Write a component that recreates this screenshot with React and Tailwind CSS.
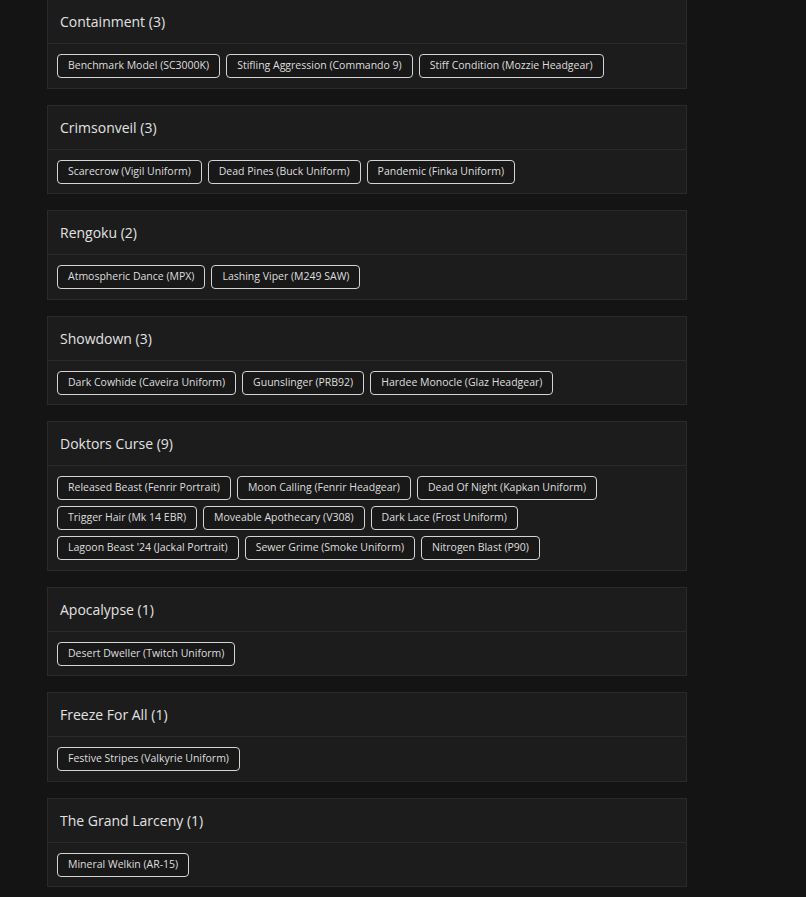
const groups = [
  { name: 'Containment', items: ['Benchmark Model (SC3000K)', 'Stifling Aggression (Commando 9)', 'Stiff Condition (Mozzie Headgear)'] },
  { name: 'Crimsonveil', items: ['Scarecrow (Vigil Uniform)', 'Dead Pines (Buck Uniform)', 'Pandemic (Finka Uniform)'] },
  { name: 'Rengoku', items: ['Atmospheric Dance (MPX)', 'Lashing Viper (M249 SAW)'] },
  { name: 'Showdown', items: ['Dark Cowhide (Caveira Uniform)', 'Guunslinger (PRB92)', 'Hardee Monocle (Glaz Headgear)'] },
  {
    name: 'Doktors Curse',
    items: [
      'Released Beast (Fenrir Portrait)', 'Moon Calling (Fenrir Headgear)', 'Dead Of Night (Kapkan Uniform)',
      'Trigger Hair (Mk 14 EBR)', 'Moveable Apothecary (V308)', 'Dark Lace (Frost Uniform)',
      "Lagoon Beast '24 (Jackal Portrait)", 'Sewer Grime (Smoke Uniform)', 'Nitrogen Blast (P90)',
    ],
  },
  { name: 'Apocalypse', items: ['Desert Dweller (Twitch Uniform)'] },
  { name: 'Freeze For All', items: ['Festive Stripes (Valkyrie Uniform)'] },
  { name: 'The Grand Larceny', items: ['Mineral Welkin (AR-15)'] },
]

function Group({ name, items }) {
  return (
    <div className="border border-[#2a2a2a] bg-[#1c1c1c]">
      <div className="h-[44px] flex items-center px-3 border-b border-[#2a2a2a]">
        <span className="text-[14px] font-medium text-[#e2e2e2]">{name} ({items.length})</span>
      </div>
      <div className="flex flex-wrap gap-[6px] px-[9px] pt-[10px] pb-[9.5px]">
        {items.map(it => (
          <span
            key={it}
            className="h-[24px] flex items-center px-[10px] rounded-[4px] border border-[#d4d4d4] text-[10.5px] text-[#dedede] bg-[#181818]"
          >
            {it}
          </span>
        ))}
      </div>
    </div>
  )
}

export default function App() {
  return (
    <div className="min-h-screen bg-[#141414] font-['Open_Sans',sans-serif] overflow-hidden">
      <div className="ml-[47px] -mt-px w-[640px] flex flex-col gap-4">
        {groups.map(g => (
          <Group key={g.name} {...g} />
        ))}
      </div>
    </div>
  )
}
